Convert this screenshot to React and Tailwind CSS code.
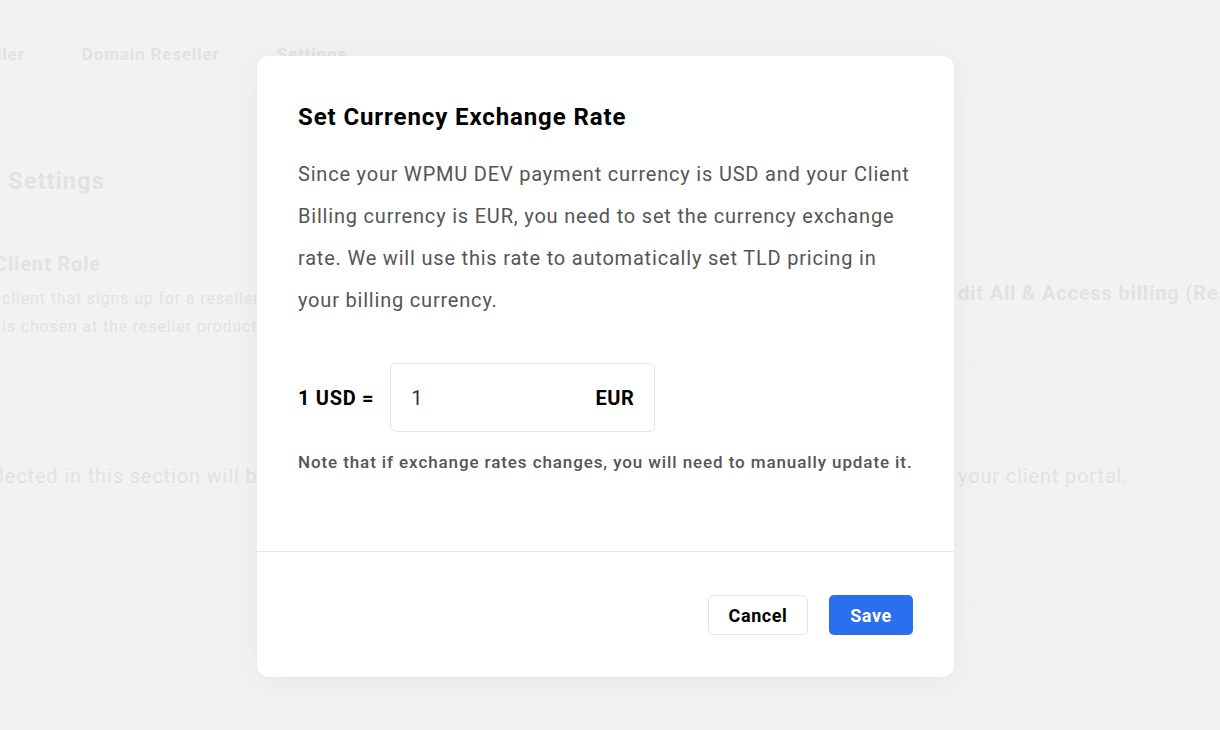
export default function App() {
  return (
    <div className="relative h-[730px] w-full overflow-hidden bg-[#f2f2f2] font-['Roboto',sans-serif] tracking-[0.85px] text-[#e2e2e2]">
      {/* Page behind the modal */}
      <div className="flex gap-[57px] pt-[43px] text-[17px] font-bold leading-[22px] whitespace-nowrap">
        <span className="ml-[-3px]">ller</span>
        <span>Domain Reseller</span>
        <span>Settings</span>
      </div>

      <div className="mt-[100px] ml-[-6px] text-[24px] font-bold leading-[32px] whitespace-nowrap">
        l Settings
      </div>

      <div className="mt-[53px] grid grid-cols-[958px_1fr]">
        <div className="whitespace-nowrap">
          <div className="ml-[-6px] text-[20px] font-bold leading-[28px]">Client Role</div>
          <div className="mt-[7px] pl-[2px] text-[16px] leading-[28px]">
            client that signs up for a reseller product gets the role that
          </div>
          <div className="pl-[2px] text-[16px] leading-[28px]">is chosen at the reseller product settings.</div>
        </div>
        <div className="pt-[29px] text-[20px] font-bold leading-[28px] whitespace-nowrap">
          dit All &amp; Access billing (Reseller)
        </div>
      </div>

      <div className="mt-[22px] h-px bg-[#eeeeee]" />

      <div className="mt-[98px] grid grid-cols-[958px_1fr] text-[20px] leading-[28px] whitespace-nowrap">
        <div className="ml-[-1px]">lected in this section will be shown to clients in</div>
        <div>your client portal.</div>
      </div>

      <div className="mt-[112px] h-px bg-[#eeeeee]" />

      {/* Modal */}
      <div className="absolute inset-0 flex items-center justify-center pr-[9px] pt-[3px]">
        <div className="w-[697px] rounded-[12px] bg-white shadow-[0_4px_30px_rgba(0,0,0,0.05)]">
          <div className="px-[41px] pt-[45px] pb-[77px]">
            <h2 className="text-[24px] font-bold leading-[32px] tracking-[0.9px] text-black">Set Currency Exchange Rate</h2>
            <p className="mt-[20px] text-[20px] leading-[42px] tracking-[0.8px] text-[#555]">
              Since your WPMU DEV payment currency is USD and your Client Billing currency is EUR, you need to set the
              currency exchange rate. We will use this rate to automatically set TLD pricing in your billing currency.
            </p>

            <div className="mt-[42px] flex items-center gap-[16px]">
              <span className="text-[20px] font-bold tracking-[0.7px] text-black">1 USD =</span>
              <div className="flex h-[69px] w-[265px] items-center justify-between rounded-[6px] border border-[#e6e6e6] px-[20px] text-[20px]">
                <span className="text-[#333]">1</span>
                <span className="font-bold tracking-[0.5px] text-black">EUR</span>
              </div>
            </div>

            <p className="mt-[18px] mr-[-12px] text-[17px] font-medium leading-[24px] tracking-[0.9px] text-[#555]">
              Note that if exchange rates changes, you will need to manually update it.
            </p>
          </div>

          <div className="flex justify-end gap-[21px] border-t border-[#e6e6e6] px-[41px] pt-[43px] pb-[42px]">
            <button className="h-[40px] w-[100px] rounded-[5px] border border-[#e6e6e6] bg-white text-[18px] font-bold tracking-[0.6px] text-black">
              Cancel
            </button>
            <button className="h-[40px] w-[84px] rounded-[5px] bg-[#2b6ef0] text-[18px] font-bold tracking-[0.6px] text-white">
              Save
            </button>
          </div>
        </div>
      </div>
    </div>
  );
}
